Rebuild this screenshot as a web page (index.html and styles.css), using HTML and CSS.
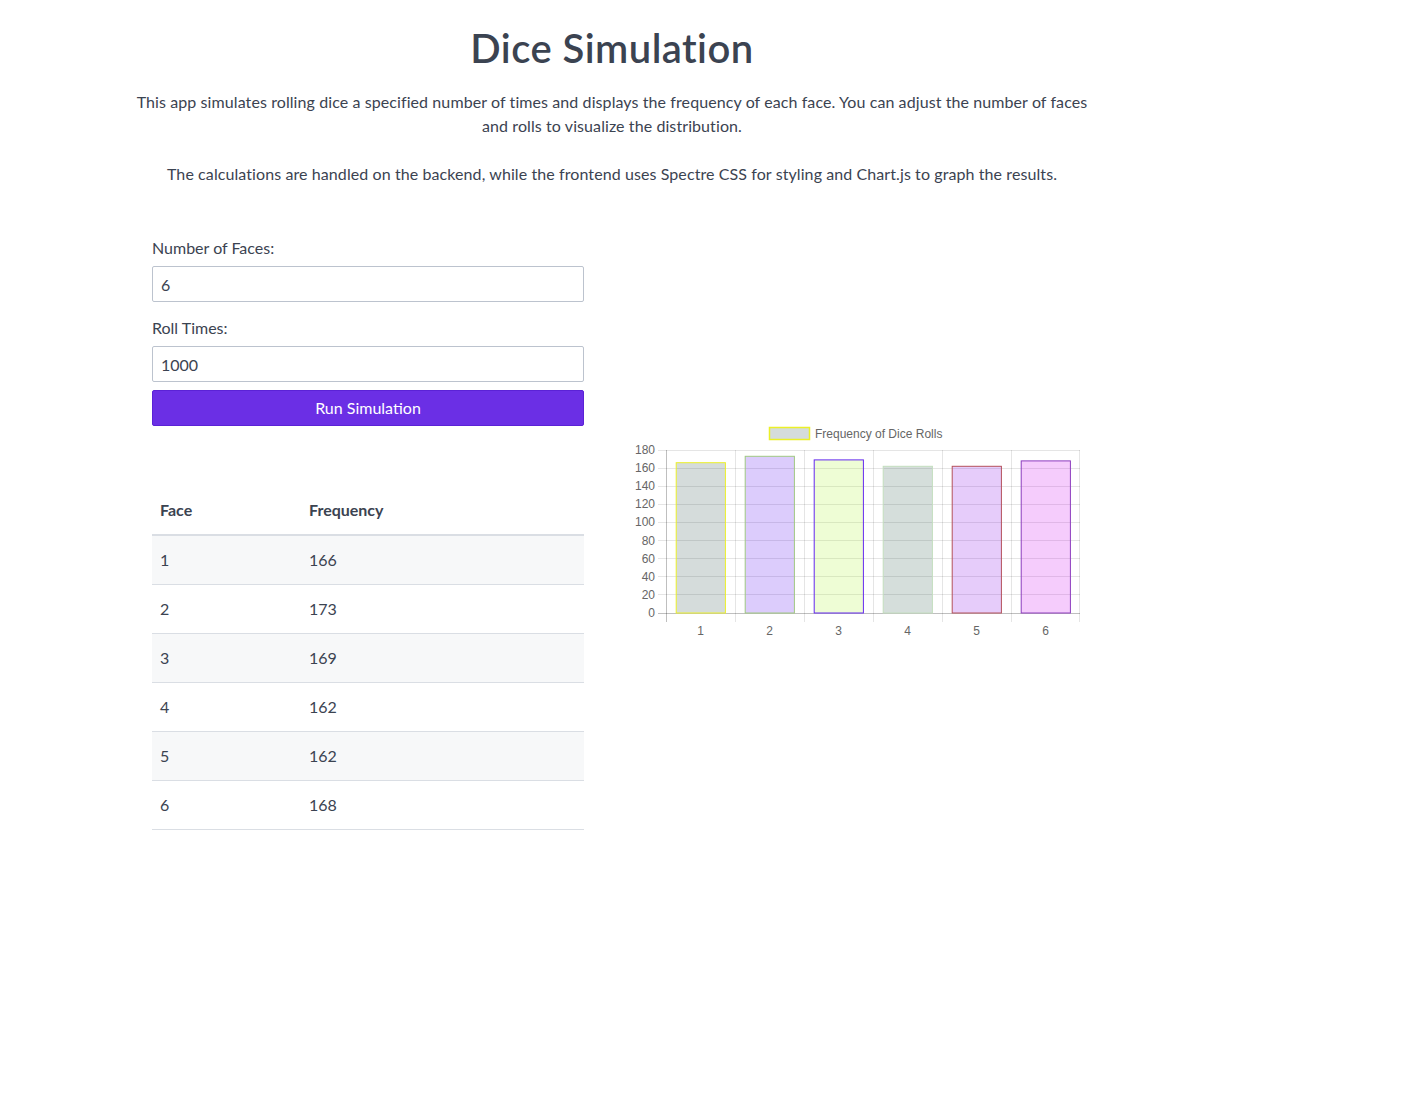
FILE: index.html
```html
<!DOCTYPE html>
<html lang="en">
<head>
<meta charset="utf-8">
<title>Dice Simulation</title>
<link rel="stylesheet" href="styles.css">
</head>
<body>
<div class="page">
  <h1 class="title">Dice Simulation</h1>
  <p class="intro">This app simulates rolling dice a specified number of times and displays the frequency of each face. You can adjust the number of faces and rolls to visualize the distribution.</p>
  <p class="intro">The calculations are handled on the backend, while the frontend uses Spectre CSS for styling and Chart.js to graph the results.</p>

  <div class="main">
    <div class="left">
      <form class="form">
        <div class="form-group">
          <label class="form-label" for="faces">Number of Faces:</label>
          <input class="form-input" id="faces" type="text" value="6">
        </div>
        <div class="form-group">
          <label class="form-label" for="rolls">Roll Times:</label>
          <input class="form-input" id="rolls" type="text" value="1000">
        </div>
        <button class="btn" type="button">Run Simulation</button>
      </form>

      <table class="table">
        <thead>
          <tr><th class="col-face">Face</th><th>Frequency</th></tr>
        </thead>
        <tbody>
          <tr><td>1</td><td>166</td></tr>
          <tr><td>2</td><td>173</td></tr>
          <tr><td>3</td><td>169</td></tr>
          <tr><td>4</td><td>162</td></tr>
          <tr><td>5</td><td>162</td></tr>
          <tr><td>6</td><td>168</td></tr>
        </tbody>
      </table>
    </div>

    <div class="right">
      <svg class="chart" width="450" height="225" viewBox="0 0 450 225">
        <g transform="translate(-630,-420)">
          <!-- legend -->
          <rect x="769.5" y="427.5" width="40" height="12" fill="rgba(45,80,75,0.2)" stroke="rgb(235,240,40)" stroke-width="1.5"/>
          <text class="lbl" x="815" y="437.5">Frequency of Dice Rolls</text>

          <!-- horizontal grid -->
          <g stroke="rgba(0,0,0,0.1)" stroke-width="1">
            <line x1="658" y1="450.5" x2="1080" y2="450.5"/>
            <line x1="658" y1="468.5" x2="1080" y2="468.5"/>
            <line x1="658" y1="486.5" x2="1080" y2="486.5"/>
            <line x1="658" y1="504.5" x2="1080" y2="504.5"/>
            <line x1="658" y1="522.5" x2="1080" y2="522.5"/>
            <line x1="658" y1="540.5" x2="1080" y2="540.5"/>
            <line x1="658" y1="558.5" x2="1080" y2="558.5"/>
            <line x1="658" y1="576.5" x2="1080" y2="576.5"/>
            <line x1="658" y1="594.5" x2="1080" y2="594.5"/>
          </g>
          <!-- vertical grid -->
          <g stroke="rgba(0,0,0,0.1)" stroke-width="1">
            <line x1="735.5" y1="450" x2="735.5" y2="622"/>
            <line x1="804.5" y1="450" x2="804.5" y2="622"/>
            <line x1="873.5" y1="450" x2="873.5" y2="622"/>
            <line x1="942.5" y1="450" x2="942.5" y2="622"/>
            <line x1="1011.5" y1="450" x2="1011.5" y2="622"/>
            <line x1="1079.5" y1="450" x2="1079.5" y2="622"/>
          </g>
          <!-- axes -->
          <g stroke="rgba(0,0,0,0.25)" stroke-width="1">
            <line x1="658" y1="613.5" x2="1080" y2="613.5"/>
            <line x1="666.5" y1="450" x2="666.5" y2="622"/>
          </g>

          <!-- bars -->
          <rect x="676.2" y="462.7" width="49.2" height="150.3" fill="rgba(45,80,75,0.2)" stroke="rgb(235,240,40)" stroke-width="1"/>
          <rect x="745.2" y="456.3" width="49.2" height="156.7" fill="rgba(80,0,240,0.2)" stroke="rgb(160,200,130)" stroke-width="1"/>
          <rect x="814.2" y="459.9" width="49.2" height="153.1" fill="rgba(170,245,45,0.2)" stroke="rgb(100,40,240)" stroke-width="1"/>
          <rect x="883.2" y="466.3" width="49.2" height="146.7" fill="rgba(45,90,75,0.2)" stroke="rgb(195,222,190)" stroke-width="1"/>
          <rect x="952.2" y="466.3" width="49.2" height="146.7" fill="rgba(130,0,230,0.2)" stroke="rgb(180,80,90)" stroke-width="1"/>
          <rect x="1021.2" y="460.9" width="49.2" height="152.1" fill="rgba(205,0,240,0.2)" stroke="rgb(140,60,190)" stroke-width="1"/>

          <!-- y labels -->
          <g class="lbl" text-anchor="end">
            <text x="655" y="454">180</text>
            <text x="655" y="472">160</text>
            <text x="655" y="490">140</text>
            <text x="655" y="508">120</text>
            <text x="655" y="526">100</text>
            <text x="655" y="544.5">80</text>
            <text x="655" y="562.5">60</text>
            <text x="655" y="580.5">40</text>
            <text x="655" y="598.5">20</text>
            <text x="655" y="617">0</text>
          </g>
          <!-- x labels -->
          <g class="lbl" text-anchor="middle">
            <text x="700.5" y="634.5">1</text>
            <text x="769.5" y="634.5">2</text>
            <text x="838.5" y="634.5">3</text>
            <text x="907.5" y="634.5">4</text>
            <text x="976.5" y="634.5">5</text>
            <text x="1045.5" y="634.5">6</text>
          </g>
        </g>
      </svg>
    </div>
  </div>
</div>
</body>
</html>
```

FILE: styles.css
```css
html, body {
  margin: 0;
  padding: 0;
  background: #fff;
}

body {
  font-family: "Lato", "Open Sans", "Noto Sans", sans-serif;
  font-size: 16px;
  line-height: 24px;
  color: #3b4351;
}

.page {
  width: 960px;
  margin-left: 132px;
  padding-top: 24px;
}

.title {
  margin: 0 0 18px;
  font-size: 40px;
  line-height: 48px;
  font-weight: 600;
  letter-spacing: 0.45px;
  text-align: center;
}

.intro {
  margin: 0 0 24px;
  letter-spacing: 0.09px;
  text-align: center;
}

.main {
  display: flex;
  align-items: center;
  gap: 46px;
  padding: 20px 20px 0;
}

.left {
  width: 432px;
  flex: none;
}

.right {
  width: 450px;
  flex: none;
  padding-top: 4px;
}

.chart {
  display: block;
}

.form {
  margin: 0 0 60px;
}

.form-group {
  margin-bottom: 8px;
}

.form-label {
  display: block;
  padding: 6px 0;
  line-height: 24px;
}

.form-input {
  display: block;
  box-sizing: border-box;
  width: 100%;
  height: 36px;
  margin: 0;
  padding: 5px 8px;
  border: 1px solid #bcc3ce;
  border-radius: 2px;
  font-family: inherit;
  font-size: 16px;
  line-height: 24px;
  color: #3b4351;
  background: #fff;
}

.btn {
  display: block;
  box-sizing: border-box;
  width: 100%;
  height: 36px;
  margin: 0;
  padding: 5px 8px;
  border: 1px solid #5b22d6;
  border-radius: 2px;
  background: #6b2fe5;
  color: #fff;
  font-family: inherit;
  font-size: 16px;
  line-height: 24px;
}

.table {
  width: 100%;
  border-collapse: collapse;
  border-spacing: 0;
  text-align: left;
}

.table th,
.table td {
  padding: 12px 8px;
  line-height: 24px;
  border-bottom: 1px solid #dadee4;
}

.table th {
  font-weight: 700;
  border-bottom-width: 2px;
}

.col-face {
  width: 133px;
}

.table tbody tr:nth-child(odd) {
  background: #f7f8f9;
}

.lbl {
  font-family: "Liberation Sans", Arial, sans-serif;
  font-size: 12px;
  fill: #666;
}
```
